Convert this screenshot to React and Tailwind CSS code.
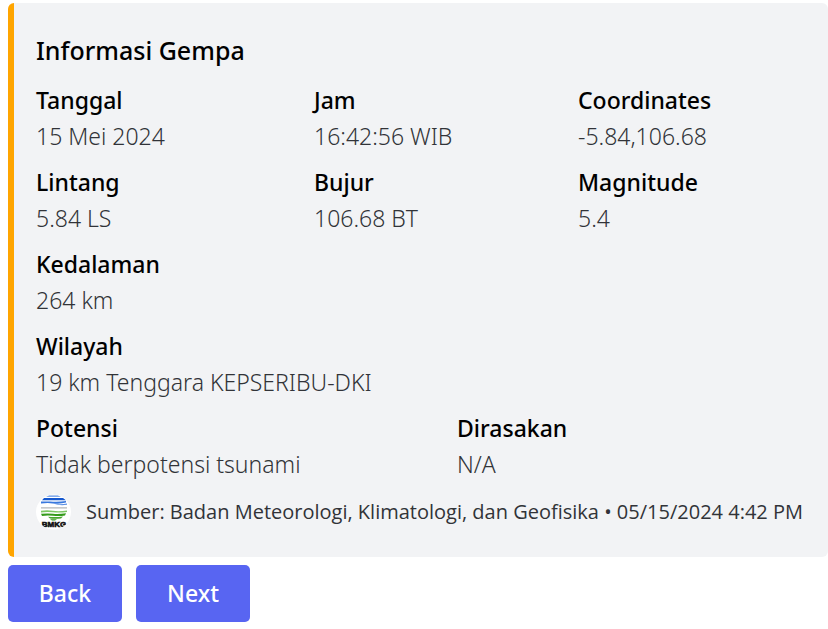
function Field({ name, children }) {
  return (
    <div>
      <dt className="text-[23px] leading-9 font-medium text-black">{name}</dt>
      <dd className="text-[23px] leading-9 font-light text-[#313338]">{children}</dd>
    </div>
  );
}

function BmkgLogo() {
  return (
    <svg viewBox="0 0 36 36" className="size-9 shrink-0" role="img" aria-label="BMKG">
      <clipPath id="badge">
        <circle cx="17.5" cy="18" r="17.5" />
      </clipPath>
      <circle cx="17.5" cy="18" r="17.5" fill="#fff" />
      <g clipPath="url(#badge)">
        <path d="M13 1.5h9l3 1.3H10z" fill="#5b8fe4" />
        <path d="M8 4h19l3 2.2H6z" fill="#1557ce" />
        <path d="M5 7.5h9q8 .8 16-.5v1.6q-6 1.6-13 .8-6-.8-12 .2z" fill="#3978de" />
        <path d="M18 9.8q7 1 13-.3v1.2q-7 1.2-13-.9z" fill="#5b8fe4" />
        <path d="M5 13.2h26v1.2H5z" fill="#b3b6b9" />
        <path d="M5 16.8q6-1 12 0t14-.4v1.5q-7 1-14 .3t-12 .2z" fill="#7cc862" />
        <path d="M5 19.8q7-.8 12 0t13-.5l-1 2.2q-6 .9-12 .2t-11 .2z" fill="#359b1c" />
        <path d="M12 22.8q8 .8 15-.4l-2 2q-5 .7-11 .2z" fill="#46a72c" />
        <path d="M14 25.3h7l-2 1.2h-3z" fill="#359b1c" />
        <text
          x="18"
          y="33"
          textAnchor="middle"
          className="font-['Liberation_Sans'] text-[8px] font-bold"
          fill="#111"
          stroke="#111"
          strokeWidth="0.6"
        >
          BMKG
        </text>
      </g>
    </svg>
  );
}

function Button({ children }) {
  return (
    <button
      type="button"
      className="h-[57px] w-[114px] rounded-[5px] bg-[#5865f2] text-[23px] font-medium text-white"
    >
      {children}
    </button>
  );
}

export default function App() {
  return (
    <main className="bg-white pt-[3px] pb-[7px] pl-2 font-['Noto_Sans','Open_Sans',sans-serif]">
      <article className="rounded-[6px] border-l-[6px] border-[#ffa500] bg-[#f2f3f5] pt-[29px] pr-[26px] pb-[27px] pl-[22px]">
        <h1 className="text-[25px] leading-9 font-medium text-black">Informasi Gempa</h1>
        <dl className="mt-3.5 grid gap-y-2.5">
          <div className="grid grid-cols-[278fr_264fr_224fr] gap-y-2.5">
            <Field name="Tanggal">15 Mei 2024</Field>
            <Field name="Jam">16:42:56 WIB</Field>
            <Field name="Coordinates">-5.84,106.68</Field>
            <Field name="Lintang">5.84 LS</Field>
            <Field name="Bujur">106.68 BT</Field>
            <Field name="Magnitude">5.4</Field>
          </div>
          <Field name="Kedalaman">264 km</Field>
          <Field name="Wilayah">19 km Tenggara KEPSERIBU-DKI</Field>
          <div className="grid grid-cols-[421fr_345fr]">
            <Field name="Potensi">Tidak berpotensi tsunami</Field>
            <Field name="Dirasakan">N/A</Field>
          </div>
        </dl>
        <footer className="mt-3 flex items-center gap-3.5 font-['Open_Sans','Noto_Sans',sans-serif] text-[20px] leading-9 font-normal text-[#313338]">
          <BmkgLogo />
          <p className="whitespace-nowrap">
            Sumber: Badan Meteorologi, Klimatologi, dan Geofisika • 05/15/2024 4:42 PM
          </p>
        </footer>
      </article>
      <div className="mt-2 flex gap-3.5">
        <Button>Back</Button>
        <Button>Next</Button>
      </div>
    </main>
  );
}
